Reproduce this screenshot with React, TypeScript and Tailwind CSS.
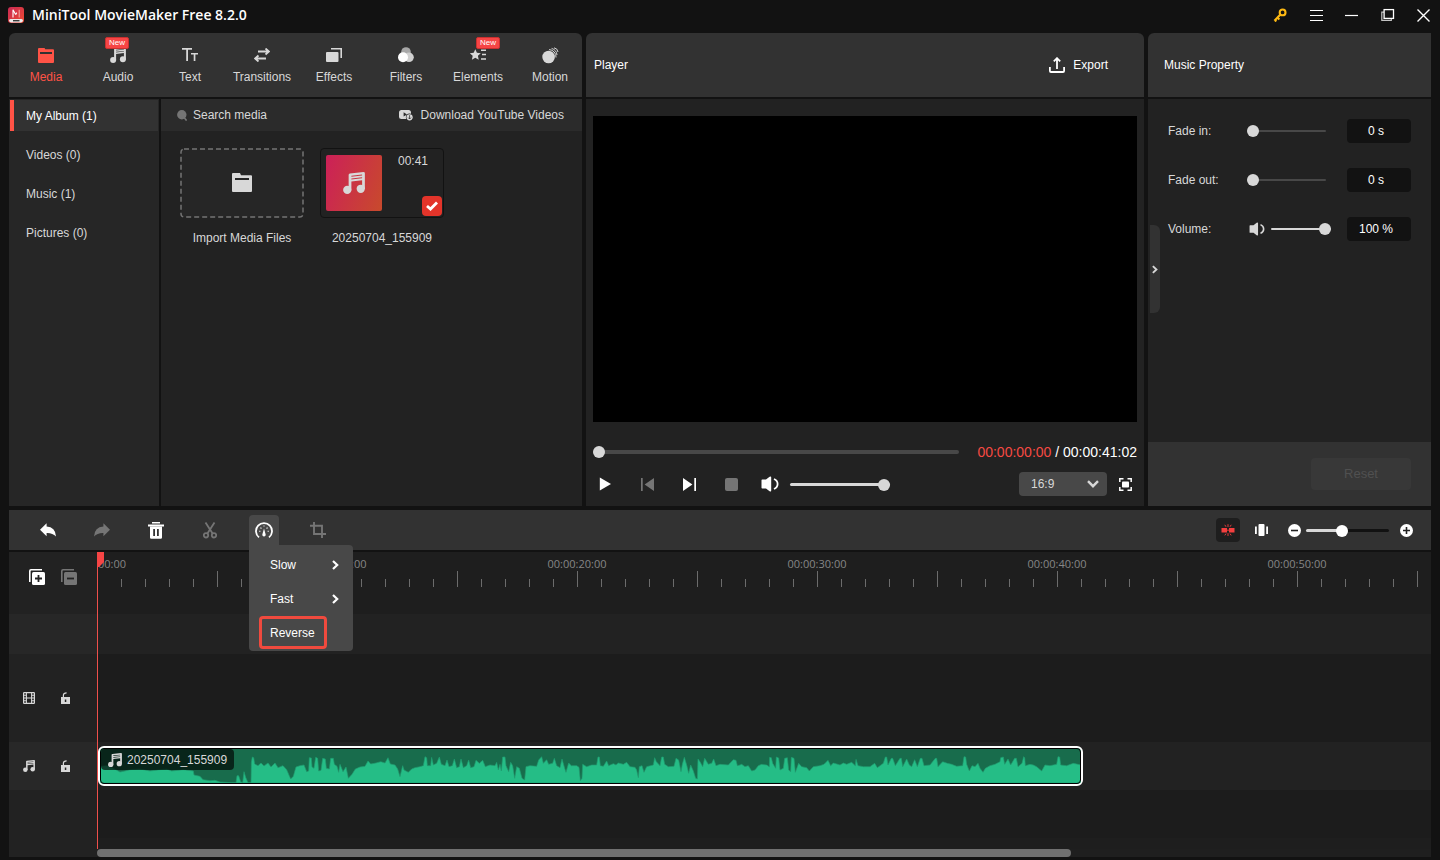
import React from "react";

type IconProps = { className?: string };

const RANGE =
  "block h-3 cursor-pointer appearance-none bg-transparent [&::-webkit-slider-runnable-track]:rounded-full [&::-webkit-slider-thumb]:size-3 [&::-webkit-slider-thumb]:appearance-none [&::-webkit-slider-thumb]:rounded-full [&::-webkit-slider-thumb]:bg-[#d8d8d8]";
const TRACK_DARK =
  "[&::-webkit-slider-runnable-track]:h-0.5 [&::-webkit-slider-runnable-track]:bg-[#484848] [&::-webkit-slider-thumb]:-mt-[5px]";
const TRACK_LIGHT =
  "[&::-webkit-slider-runnable-track]:h-0.5 [&::-webkit-slider-runnable-track]:bg-[#d8d8d8] [&::-webkit-slider-thumb]:-mt-[5px]";
const TRACK_LIGHT_THICK =
  "[&::-webkit-slider-runnable-track]:h-[3px] [&::-webkit-slider-runnable-track]:bg-[#d8d8d8] [&::-webkit-slider-thumb]:-mt-1";

/* ---------- icons ---------- */

function NoteIcon({ className = "size-4" }: IconProps) {
  return (
    <svg viewBox="0 0 16 16" className={className} fill="currentColor" aria-hidden="true">
      <path d="M4.1 2.1Q4.1 1.2 5 1L14.9 0Q15.9 0 15.9 .9V12.4H13.9V6L6.1 6.9V13.4H4.1Z M6.1 2.7V3.4L13.9 2.6V1.9Z M6.1 4.7V5.4L13.9 4.6V3.9Z" fillRule="evenodd" />
      <circle cx="3.1" cy="13" r="3" />
      <circle cx="12.9" cy="12.2" r="3" />
    </svg>
  );
}

function FolderIcon({ className = "h-[15px] w-4" }: IconProps) {
  return (
    <svg viewBox="0 0 16 15" className={className} fill="currentColor" aria-hidden="true">
      <path fillRule="evenodd" d="M1 0H6.6L7.2 1.3H15Q16 1.3 16 2.3V14Q16 15 15 15H1Q0 15 0 14V1Q0 0 1 0Z M2 4V6H14V4Z" />
    </svg>
  );
}

function TextIcon() {
  return (
    <svg viewBox="0 0 16 14" className="h-3.5 w-4" fill="currentColor" aria-hidden="true">
      <path d="M0 0H10V1.7H6V13H4.2V1.7H0Z M9 5H16V6.6H13.4V13H11.7V6.6H9Z" />
    </svg>
  );
}

function TransitionsIcon() {
  return (
    <svg viewBox="0 0 16 14" className="h-3.5 w-4" fill="none" stroke="currentColor" strokeWidth="1.8" aria-hidden="true">
      <path d="M4 3.5H15M11.5 .5L15 3.5L11.5 6.5M12 10.5H1M4.5 7.5L1 10.5L4.5 13.5" />
    </svg>
  );
}

function EffectsIcon() {
  return (
    <svg viewBox="0 0 16 14" className="h-3.5 w-4" aria-hidden="true">
      <rect x="0" y="4" width="12.5" height="10" rx="1" fill="currentColor" />
      <path d="M5 .8H15.2V10" fill="none" stroke="currentColor" strokeWidth="1.6" />
    </svg>
  );
}

function FiltersIcon() {
  return (
    <svg viewBox="0 0 16 16" className="size-4" aria-hidden="true">
      <circle cx="8" cy="5" r="4.8" fill="#a8a8a8" />
      <circle cx="11" cy="10.3" r="4.8" fill="#d0d0d0" />
      <circle cx="5" cy="10.3" r="5" fill="#ffffff" />
    </svg>
  );
}

function ElementsIcon() {
  return (
    <svg viewBox="0 0 16 12" className="h-3 w-4" fill="currentColor" aria-hidden="true">
      <path d="M5.3 .2L6.9 3.8L10.8 4.2L7.9 6.8L8.7 10.8L5.3 8.8L1.9 10.8L2.7 6.8L-.2 4.2L3.7 3.8Z" />
      <path d="M11 .5H16V2H11Z M12 4.8H16V6.3H12Z M11 9.2H16V10.7H11Z" />
    </svg>
  );
}

function MotionIcon() {
  return (
    <svg viewBox="0 0 17 17" className="size-[17px]" aria-hidden="true">
      <circle cx="6.6" cy="10" r="6.3" fill="currentColor" />
      <path d="M7 2.6A7.2 7.2 0 0 1 14 10.5M9.6 1.4Q14.6 3 15 8M12 .8Q15.6 1.4 16 5" fill="none" stroke="currentColor" strokeWidth="1" />
    </svg>
  );
}

function SpeakerIcon({ className = "h-4 w-[18px]" }: IconProps) {
  return (
    <svg viewBox="0 0 18 16" className={className} aria-hidden="true">
      <path d="M1.2 3.6H5L8.6 .8Q10.2 0 10.2 1.4V14.6Q10.2 16 8.6 15.2L5 12.4H1.2Q.5 12.4 .5 11.7V4.3Q.5 3.6 1.2 3.6Z" fill="currentColor" />
      <path d="M13 3Q16.6 4.6 16.6 8T13 13" fill="none" stroke="currentColor" strokeWidth="1.8" />
    </svg>
  );
}

function ChevronRight({ className = "h-2.5 w-[7px]" }: IconProps) {
  return (
    <svg viewBox="0 0 7 10" className={className} fill="none" stroke="currentColor" strokeWidth="2.2" aria-hidden="true">
      <path d="M1 1L5.2 5L1 9" />
    </svg>
  );
}

function LockIcon() {
  return (
    <svg viewBox="0 0 9 12" className="h-3 w-[9px]" aria-hidden="true">
      <path fillRule="evenodd" fill="currentColor" d="M0 5H9V12H0Z M3.8 7.5V10H5.3V7.5Z" />
      <path d="M2.4 5.5V3Q2.6 .8 5.6 .8" fill="none" stroke="currentColor" strokeWidth="1.2" />
    </svg>
  );
}

function FilmIcon() {
  return (
    <svg viewBox="0 0 12 12" className="size-3" fill="none" stroke="currentColor" aria-hidden="true">
      <rect x=".6" y=".6" width="10.8" height="10.8" rx=".6" strokeWidth="1.2" />
      <path d="M3.4 .5V11.5M8.6 .5V11.5M3.4 6H8.6M.5 3.2H3.4M.5 6H3.4M.5 8.8H3.4M8.6 3.2H11.5M8.6 6H11.5M8.6 8.8H11.5" strokeWidth="1.1" />
    </svg>
  );
}

function TrackStackIcon({ minus = false }: { minus?: boolean }) {
  return (
    <svg viewBox="0 0 16 16" className="size-4" aria-hidden="true">
      <path d="M.8 13V2Q.8 .8 2 .8H13" fill="none" stroke="currentColor" strokeWidth="1.6" />
      <rect x="3" y="3" width="13" height="13" rx="1.5" fill="currentColor" />
      <path d={minus ? "M6 9.5H13" : "M6 9.5H13M9.5 6V13"} stroke="#222" strokeWidth="1.8" />
    </svg>
  );
}

function ReplyIcon({ flip = false }: { flip?: boolean }) {
  return (
    <svg viewBox="0 0 16 14" className={flip ? "h-3.5 w-4 -scale-x-100" : "h-3.5 w-4"} fill="currentColor" aria-hidden="true">
      <path d="M0 6.8L6.6 .3V3.6Q15.4 4 16 13.6Q12.4 9.8 6.6 10.1V13.3Z" />
    </svg>
  );
}

function TrashIcon() {
  return (
    <svg viewBox="0 0 16 17" className="h-[17px] w-4" fill="currentColor" aria-hidden="true">
      <path d="M4 0H12V1.4H4Z M0 2.6H16V4.4H0Z" />
      <path fillRule="evenodd" d="M2 4.4H14V15.5Q14 16.8 12.7 16.8H3.3Q2 16.8 2 15.5Z M5.2 7V14H7V7Z M9 7V14H10.8V7Z" />
    </svg>
  );
}

function CutIcon() {
  return (
    <svg viewBox="0 0 14 17" className="h-[17px] w-3.5" fill="none" stroke="currentColor" strokeWidth="1.8" aria-hidden="true">
      <path d="M2.5 .5L9.6 11.4M11.5 .5L4.4 11.4" />
      <circle cx="3" cy="13.3" r="2.2" />
      <circle cx="11" cy="13.3" r="2.2" />
    </svg>
  );
}

function GaugeIcon() {
  return (
    <svg viewBox="0 0 18 17" className="h-[17px] w-[18px]" aria-hidden="true">
      <path d="M4 15.4A8 8 0 1 1 14 15.4" fill="none" stroke="currentColor" strokeWidth="1.8" />
      <path d="M9 6.5L10.6 12.2A1.7 1.7 0 1 1 7.4 12.2Z" fill="currentColor" />
      <path d="M4.2 9.2H5.4M12.6 9.2H13.8M5.5 5.7L6.4 6.5M12.5 5.7L11.6 6.5M8.5 4H9.5" stroke="currentColor" strokeWidth="1.1" />
    </svg>
  );
}

function CropIcon() {
  return (
    <svg viewBox="0 0 16 16" className="size-4" fill="none" stroke="currentColor" strokeWidth="1.9" aria-hidden="true">
      <path d="M4 0V12H16M0 3.8H12V16" />
    </svg>
  );
}

function SplitIcon() {
  return (
    <svg viewBox="0 0 14 12" className="h-3 w-3.5 text-[#f43f3f]" aria-hidden="true">
      <path d="M.5 4H6V8.6H.5Z M8 4H13.5V8.6H8Z" fill="currentColor" />
      <path d="M7 .2V3M7 9.2V12M3.8 .8L5 2.8M10.2 .8L9 2.8M3.8 11.4L5 9.6M10.2 11.4L9 9.6M6 6.2H8" stroke="currentColor" strokeWidth=".9" />
    </svg>
  );
}

function FitIcon() {
  return (
    <svg viewBox="0 0 13 12" className="h-3 w-[13px]" fill="currentColor" aria-hidden="true">
      <rect x="3.5" y="0" width="6" height="12" rx="1" />
      <rect x="0" y="2.5" width="1.8" height="7.5" />
      <rect x="11.2" y="2.5" width="1.8" height="7.5" />
    </svg>
  );
}

function ZoomDot({ plus = false }: { plus?: boolean }) {
  return (
    <svg viewBox="0 0 13 13" className="size-[13px]" aria-hidden="true">
      <circle cx="6.5" cy="6.5" r="6.5" fill="#fff" />
      <path d={plus ? "M3 6.5H10M6.5 3V10" : "M3 6.5H10"} stroke="#222" strokeWidth="1.6" />
    </svg>
  );
}

function AppLogo() {
  return (
    <svg viewBox="0 0 16 16" className="size-4" aria-hidden="true">
      <defs>
        <linearGradient id="logo" x1="0" y1="0" x2="1" y2="1">
          <stop offset="0" stopColor="#c92a55" />
          <stop offset="1" stopColor="#ef4a30" />
        </linearGradient>
      </defs>
      <rect width="16" height="16" rx="3" fill="url(#logo)" />
      <path d="M5 10.5V2.8L7.6 7.6M7.6 7.6L8.8 5.6" fill="none" stroke="#fff" strokeWidth="1.1" />
      <path d="M11.2 2.8V10.5" fill="none" stroke="#f6b7ae" strokeWidth=".9" />
      <path d="M1 13.6Q1 11.8 3 12H13Q15 11.8 15 13.6T13 15.4H3Q1 15.4 1 13.6Z" fill="#ececec" />
      <path d="M5 13.7H11.5" stroke="#3a3a3a" strokeWidth="1.4" />
    </svg>
  );
}

/* ---------- title bar ---------- */

function TitleBar() {
  return (
    <header className="flex h-[33px] shrink-0 items-center justify-between pr-[9px] pb-[3px] pl-2">
      <div className="flex items-center gap-2">
        <AppLogo />
        <h1 className="font-['Open_Sans',sans-serif] text-sm font-semibold text-white">MiniTool MovieMaker Free 8.2.0</h1>
      </div>
      <div className="flex items-center gap-[22px] text-white">
        <button aria-label="License key">
          <svg viewBox="0 0 14 14" className="size-3.5" aria-hidden="true">
            <circle cx="9.6" cy="4.4" r="2.9" fill="none" stroke="#fdb913" strokeWidth="2.1" />
            <path d="M7.4 6.6L1.4 12.8M4.6 9.8L6.4 11.6M2 12.2L3.4 13.4" fill="none" stroke="#fdb913" strokeWidth="2.1" />
          </svg>
        </button>
        <button aria-label="Menu">
          <svg viewBox="0 0 14 14" className="size-3.5" stroke="currentColor" strokeWidth="1.2" aria-hidden="true">
            <path d="M1 2.5H14M1 7.5H14M1 12.5H14" />
          </svg>
        </button>
        <button aria-label="Minimize">
          <svg viewBox="0 0 14 14" className="size-3.5" stroke="currentColor" strokeWidth="1.2" aria-hidden="true">
            <path d="M0 7.5H13" />
          </svg>
        </button>
        <button aria-label="Restore">
          <svg viewBox="0 0 14 14" className="size-3.5" fill="none" stroke="currentColor" aria-hidden="true">
            <rect x="3.1" y="1.6" width="9.4" height="8.8" strokeWidth="1.3" />
            <path d="M3 4.1H.8V12.3H10.3V10.5" strokeWidth="1.2" opacity=".75" />
          </svg>
        </button>
        <button aria-label="Close">
          <svg viewBox="0 0 14 14" className="size-3.5" stroke="currentColor" strokeWidth="1.4" aria-hidden="true">
            <path d="M.5 1.5L12.5 13.5M12.5 1.5L.5 13.5" />
          </svg>
        </button>
      </div>
    </header>
  );
}

/* ---------- media library ---------- */

const tabs: { label: string; icon: React.ReactNode; badge?: string }[] = [
  { label: "Media", icon: <FolderIcon /> },
  { label: "Audio", icon: <NoteIcon />, badge: "absolute top-1 left-[23px]" },
  { label: "Text", icon: <TextIcon /> },
  { label: "Transitions", icon: <TransitionsIcon /> },
  { label: "Effects", icon: <EffectsIcon /> },
  { label: "Filters", icon: <FiltersIcon /> },
  { label: "Elements", icon: <ElementsIcon />, badge: "absolute top-1 left-[34px]" },
  { label: "Motion", icon: <MotionIcon /> },
];

const albums = ["My Album (1)", "Videos (0)", "Music (1)", "Pictures (0)"];

function Library() {
  return (
    <section className="flex min-w-0 flex-col gap-0.5 overflow-hidden rounded-t-md">
      <nav className="flex h-16 shrink-0 overflow-hidden bg-[#323232] pl-px">
        {tabs.map((tab, i) => (
          <button
            key={tab.label}
            className={`relative flex w-[72px] shrink-0 flex-col items-center pt-3.5 ${i === 0 ? "text-[#ff5346]" : "text-[#d8d8d8]"}`}
          >
            <span className="flex h-4 items-center">{tab.icon}</span>
            <span className="mt-1.5 leading-4">{tab.label}</span>
            {tab.badge && (
              <span className={tab.badge}>
                <span className="block h-3 w-6 rounded-xs border border-[#c9302f] bg-[#f64545] text-center text-[8px] leading-[10px] text-white">New</span>
              </span>
            )}
          </button>
        ))}
      </nav>
      <div className="flex flex-1 gap-0.5">
        <ul className="flex w-[150px] shrink-0 flex-col gap-2 bg-[#262626] p-px">
          {albums.map((name, i) => (
            <li key={name}>
              <button
                className={`h-[31px] w-full border-l-4 pl-3 text-left ${
                  i === 0 ? "border-[#ff5346] bg-[#323232] text-white" : "border-transparent text-[#d8d8d8]"
                }`}
              >
                {name}
              </button>
            </li>
          ))}
        </ul>
        <div className="min-w-0 flex-1 bg-[#222222]">
          <div className="flex h-8 items-center justify-between bg-[#2b2b2b] pr-[18px] pl-4">
            <label className="flex items-center gap-1.5">
              <svg viewBox="0 0 10 11" className="h-[11px] w-2.5 text-[#757575]" aria-hidden="true">
                <circle cx="4.8" cy="4.8" r="4.7" fill="currentColor" />
                <path d="M7 7.5L9.6 10.6" stroke="currentColor" strokeWidth="1.6" />
              </svg>
              <input aria-label="Search media" placeholder="Search media" className="w-32 bg-transparent outline-none placeholder:text-[#d8d8d8]" />
            </label>
            <a href="#youtube" className="flex items-center gap-2 text-[#d8d8d8]">
              <svg viewBox="0 0 14 11" className="h-[11px] w-3.5" aria-hidden="true">
                <rect x="0" y="0" width="12" height="9" rx="2.5" fill="currentColor" />
                <path d="M4.6 2.2V6.6L8 4.4Z" fill="#2b2b2b" />
                <circle cx="10.6" cy="7.3" r="3.7" fill="#2b2b2b" />
                <circle cx="10.6" cy="7.3" r="3.1" fill="currentColor" />
                <path d="M10.6 5.2V9M9.2 7.6L10.6 9L12 7.6" stroke="#2b2b2b" strokeWidth=".8" fill="none" />
              </svg>
              Download YouTube Videos
            </a>
          </div>
          <div className="flex flex-wrap gap-4 pt-[17px] pl-[19px] text-[#d8d8d8]">
            <button className="w-[124px]">
              <svg className="block h-[70px] w-full" aria-hidden="true">
                <rect x="1" y="1" width="122" height="68" rx="3" fill="#262626" stroke="#747474" strokeWidth="1.5" strokeDasharray="5 3" />
                <path transform="translate(52 25)" fill="#d8d8d8" fillRule="evenodd" d="M1 0H8L9 2.2H19Q20 2.2 20 3.2V18Q20 19 19 19H1Q0 19 0 18V1Q0 0 1 0Z M3 5V7H17V5Z" />
              </svg>
              <span className="mt-3 block leading-4">Import Media Files</span>
            </button>
            <figure className="w-[124px]">
              <div className="flex h-[70px] gap-4 rounded-sm border border-[#121212] px-[5px] py-1.5">
                <div className="flex size-14 items-center justify-center rounded-xs bg-[linear-gradient(110deg,#cc2058,#c84a2c)]">
                  <NoteIcon className="size-[22px]" />
                </div>
                <div className="flex flex-1 flex-col">
                  <span className="leading-3">00:41</span>
                  <span className="-mr-1 mt-auto -mb-[5px] flex size-5 items-center justify-center self-end rounded-sm bg-[#e3342a]">
                    <svg viewBox="0 0 12 10" className="h-2.5 w-3" fill="none" stroke="#fff" strokeWidth="2.8" aria-hidden="true">
                      <path d="M1 5L4.5 8.1L11 1.5" />
                    </svg>
                  </span>
                </div>
              </div>
              <figcaption className="mt-3 text-center leading-4">20250704_155909</figcaption>
            </figure>
          </div>
        </div>
      </div>
    </section>
  );
}

/* ---------- player ---------- */

function Player() {
  return (
    <section className="flex min-w-0 flex-col gap-0.5 overflow-hidden rounded-t-md">
      <div className="flex h-16 shrink-0 items-center justify-between bg-[#323232] pr-9 pl-2 text-white">
        <h2>Player</h2>
        <button className="flex items-center gap-2">
          <svg viewBox="0 0 16 16" className="size-4" fill="none" stroke="currentColor" strokeWidth="1.8" aria-hidden="true">
            <path d="M.9 10V14Q.9 15 2 15H14Q15.1 15 15.1 14V10M8 12V1.5M4.8 4.4L8 1.2L11.2 4.4" />
          </svg>
          Export
        </button>
      </div>
      <div className="flex-1 bg-[#222222] px-[7px] pt-[17px] pb-2">
        <div className="aspect-video w-full bg-black" />
        <div className="mt-5 flex h-5 items-center gap-[18px]">
          <input
            type="range"
            aria-label="Position"
            defaultValue={0}
            className={`min-w-0 flex-1 ${RANGE} [&::-webkit-slider-runnable-track]:h-1 [&::-webkit-slider-runnable-track]:bg-[#484848] [&::-webkit-slider-thumb]:-mt-1`}
          />
          <p className="text-sm text-white">
            <span className="text-[#f64a42]">00:00:00:00</span> / 00:00:41:02
          </p>
        </div>
        <div className="mt-2.5 flex h-6 items-center justify-between text-white">
          <div className="flex items-center gap-[18px]">
            <button aria-label="Play" className="flex w-6 justify-center">
              <svg viewBox="0 0 12 14" className="h-3.5 w-3" fill="currentColor" aria-hidden="true"><path d="M.8 .5L12 7L.8 13.5Z" /></svg>
            </button>
            <button aria-label="Previous frame" className="flex w-6 justify-center text-[#757575]">
              <svg viewBox="0 0 13 13" className="size-[13px]" fill="currentColor" aria-hidden="true"><path d="M0 0H1.7V13H0Z M13 0V13L3.6 6.5Z" /></svg>
            </button>
            <button aria-label="Next frame" className="flex w-6 justify-center">
              <svg viewBox="0 0 13 13" className="size-[13px]" fill="currentColor" aria-hidden="true"><path d="M11.3 0H13V13H11.3Z M0 0V13L9.4 6.5Z" /></svg>
            </button>
            <button aria-label="Stop" className="flex w-6 justify-center">
              <span className="block size-[13px] rounded-xs bg-[#757575]" />
            </button>
            <div className="flex items-center gap-[11px]">
              <button aria-label="Mute"><SpeakerIcon /></button>
              <input
                type="range"
                aria-label="Player volume"
                defaultValue={100}
                className={`w-[100px] ${RANGE} ${TRACK_LIGHT_THICK}`}
              />
            </div>
          </div>
          <div className="flex items-center gap-1.5">
            <div className="relative">
              <select aria-label="Aspect ratio" className="block h-6 w-[88px] appearance-none rounded-sm bg-[#484848] pl-3 text-[#d8d8d8]">
                <option>16:9</option>
                <option>9:16</option>
                <option>4:3</option>
              </select>
              <svg viewBox="0 0 12 8" className="pointer-events-none absolute top-2 right-2 h-2 w-3" fill="none" stroke="#d8d8d8" strokeWidth="2.4" aria-hidden="true">
                <path d="M1 1.2L6 6.2L11 1.2" />
              </svg>
            </div>
            <button aria-label="Full screen" className="flex w-6 justify-center">
              <svg viewBox="0 0 13 13" className="size-[13px]" aria-hidden="true">
                <path d="M.8 4V.8H4.5M8.5 .8H12.2V4M12.2 9V12.2H8.5M4.5 12.2H.8V9" fill="none" stroke="currentColor" strokeWidth="1.5" />
                <rect x="3" y="3.5" width="7" height="6" rx=".8" fill="currentColor" />
              </svg>
            </button>
          </div>
        </div>
      </div>
    </section>
  );
}

/* ---------- properties ---------- */

function Property({ id, label, unit, children }: { id: string; label: string; unit: string; children: React.ReactNode }) {
  return (
    <div className="flex h-6 items-center">
      <label htmlFor={id} className="w-[79px] text-[#d8d8d8]">{label}</label>
      {children}
      <input aria-label={`${label} value`} defaultValue={unit} className="ml-auto h-6 w-16 rounded-sm bg-[#121212] pr-1.5 text-center text-white" />
    </div>
  );
}

function Properties() {
  return (
    <section className="relative flex min-w-0 flex-col gap-0.5">
      <h2 className="flex h-16 shrink-0 items-center rounded-tl-md bg-[#323232] pl-4 text-white">Music Property</h2>
      <div className="flex flex-1 flex-col justify-between bg-[#222222]">
        <div className="flex flex-col gap-[25px] px-5 pt-5">
          <Property id="fade-in" label="Fade in:" unit="0 s">
            <input id="fade-in" type="range" defaultValue={0} className={`w-[79px] ${RANGE} ${TRACK_DARK}`} />
          </Property>
          <Property id="fade-out" label="Fade out:" unit="0 s">
            <input id="fade-out" type="range" defaultValue={0} className={`w-[79px] ${RANGE} ${TRACK_DARK}`} />
          </Property>
          <Property id="volume" label="Volume:" unit="100 %">
            <span className="flex items-center gap-1.5 pl-0.5 text-[#d8d8d8]">
              <SpeakerIcon className="h-3.5 w-4" />
              <input id="volume" type="range" defaultValue={100} className={`w-[60px] ${RANGE} ${TRACK_LIGHT}`} />
            </span>
          </Property>
        </div>
        <div className="flex h-16 items-center justify-end bg-[#323232] pr-5">
          <button disabled className="h-8 w-[100px] rounded-sm bg-[#383838] text-[13px] text-[#505050]">Reset</button>
        </div>
      </div>
      <button aria-label="Collapse panel" className="absolute top-48 left-0.5 flex h-[88px] w-2.5 items-center justify-center rounded-r-md bg-[#323232] text-[#d8d8d8]">
        <ChevronRight className="h-[9px] w-[6px]" />
      </button>
    </section>
  );
}

/* ---------- timeline ---------- */

function SpeedMenu() {
  return (
    <div role="menu" className="absolute top-full left-0 z-20 w-[104px] rounded-b-sm rounded-tr-sm bg-[#484848] pt-[3px] pb-0.5 text-white">
      {["Slow", "Fast"].map((item) => (
        <button key={item} role="menuitem" className="flex h-[34px] w-full items-center justify-between pr-3.5 pl-[21px]">
          {item}
          <ChevronRight />
        </button>
      ))}
      <button role="menuitem" className="ml-2.5 block h-[33px] w-[68px] rounded-sm border-3 border-[#f04a3e] pl-2 text-left">
        Reverse
      </button>
    </div>
  );
}

function TimelineToolbar() {
  const tool = "flex h-[30px] w-[30px] items-center justify-center rounded-t-sm";
  return (
    <div className="flex h-10 items-center justify-between bg-[#323232] pr-[18px] pl-6">
      <div className="flex items-center gap-6 text-white">
        <button aria-label="Undo" className={tool}><ReplyIcon /></button>
        <button aria-label="Redo" className={`${tool} text-[#757575]`}><ReplyIcon flip /></button>
        <button aria-label="Delete" className={tool}><TrashIcon /></button>
        <button aria-label="Split" className={`${tool} text-[#757575]`}><CutIcon /></button>
        <div className="relative">
          <button aria-label="Speed" aria-haspopup="menu" aria-expanded="true" className={`${tool} bg-[#484848]`}><GaugeIcon /></button>
          <SpeedMenu />
        </div>
        <button aria-label="Crop" className={`${tool} text-[#757575]`}><CropIcon /></button>
      </div>
      <div className="flex items-center text-white">
        <button aria-label="Snap" className="flex size-6 items-center justify-center rounded-sm bg-[#1e1e1e]"><SplitIcon /></button>
        <button aria-label="Fit timeline" className="ml-[15px]"><FitIcon /></button>
        <button aria-label="Zoom out" className="ml-5"><ZoomDot /></button>
        <input
          type="range"
          aria-label="Timeline zoom"
          defaultValue={42}
          className={`ml-[5px] w-[83px] ${RANGE} [&::-webkit-slider-runnable-track]:h-[3px] [&::-webkit-slider-runnable-track]:bg-[linear-gradient(to_right,#d8d8d8_42%,#121212_42%)] [&::-webkit-slider-thumb]:-mt-1 [&::-webkit-slider-thumb]:bg-white`}
        />
        <button aria-label="Zoom in" className="ml-[11px]"><ZoomDot plus /></button>
      </div>
    </div>
  );
}

const marks = ["00:00", "00:00:10:00", "00:00:20:00", "00:00:30:00", "00:00:40:00", "00:00:50:00"];
const seconds = Array.from({ length: 60 }, (_, i) => i);

function Ruler() {
  return (
    <div className="h-[62px] overflow-hidden bg-[#1e1e1e]">
      <div className="-ml-[120px] flex w-max pt-1 font-['Open_Sans',sans-serif] text-[11px] leading-4 text-[#868686]">
        {marks.map((m) => (
          <span key={m} className={`w-60 text-center ${m === "00:00" ? "pl-[30px]" : ""}`}>{m}</span>
        ))}
      </div>
      <div className="-mt-px flex h-4 w-max items-end">
        {seconds.map((s) => (
          <span key={s} className={`w-6 border-l border-[#6c6c6c] ${s % 5 === 0 ? "h-4" : "h-2"}`} />
        ))}
      </div>
    </div>
  );
}

/* Outline of the audio level: x, y pairs, three units to a pixel. */
const levels: [number, number[]][] = [
  [0, [0,52, 20,50, 40,58, 60,69, 75,66, 90,62, 120,60, 150,66, 180,62, 200,60, 215,66, 250,62, 280,66, 282,78, 300,82, 309,92, 330,95, 345,94, 360,99, 395,101, 408,101, 411,80, 416,80, 422,98, 428,101, 432,68, 437,85, 444,101, 453,101, 454,40, 457,24, 461,26, 464,45, 474,50, 483,42, 492,51, 504,42, 513,54, 525,42, 534,56, 549,50, 560,62, 572,90, 580,82, 588,54, 600,50, 612,48, 620,68, 626,66, 628,26, 634,27, 636,54, 642,58, 647,25, 653,28, 656,66, 663,64, 668,28, 676,30, 679,58, 688,60, 692,28, 700,28, 703,46, 711,52, 716,70, 720,46, 729,68, 738,54, 745,88, 756,76, 766,60, 780,54, 795,52, 804,36, 812,45, 828,42, 842,38, 855,42, 864,26, 871,45, 885,48, 893,60]],
  [900, [0,83, 8,50, 12,63, 25,70, 35,60, 45,56, 60,53, 70,50, 75,23, 80,26, 82,50, 92,50, 95,25, 100,48, 110,43, 118,24, 124,46, 135,50, 141,33, 147,53, 157,50, 163,30, 170,56, 178,53, 183,30, 190,56, 200,50, 206,33, 212,56, 222,53, 228,34, 238,43, 248,34, 256,53, 270,48, 285,50, 290,40, 295,63, 300,46, 304,66, 308,24, 315,24, 318,50, 326,68, 332,40, 338,50, 344,88, 350,53, 358,58, 366,88, 374,93, 378,53, 390,50, 410,52, 416,33, 425,23, 430,43, 440,32, 446,46, 458,43, 463,28, 470,50, 480,56, 486,30, 494,58, 498,70, 506,42, 514,50, 530,50, 537,55, 541,95, 546,88, 548,46, 560,53, 575,48, 590,48, 594,24, 598,24, 601,50, 610,52, 620,36, 626,50, 640,44, 648,48, 655,42, 670,46, 680,40, 690,53, 705,55, 710,63, 715,86, 718,53, 726,50, 732,70, 740,53, 760,48, 764,26, 769,38, 780,50, 785,24, 790,24, 794,46, 805,53, 822,52, 828,28, 836,33, 843,68, 847,46, 853,25, 860,48, 866,73, 872,48, 880,66, 887,88, 892,90, 894,30, 900,38, 908,53, 914,28, 925,46, 935,43, 941,30, 948,50, 960,46, 985,48, 1000,32, 1008,34, 1012,50]],
  [1920, [0,48, 5,46, 15,53, 25,50, 35,66, 45,63, 55,50, 65,46, 80,48, 88,53, 89,25, 94,26, 98,43, 107,58, 109,24, 116,27, 120,63, 130,58, 134,28, 142,26, 146,63, 152,68, 154,25, 162,28, 166,70, 176,43, 185,53, 200,56, 208,66, 220,53, 240,50, 252,46, 264,34, 272,50, 280,42, 300,48, 310,42, 320,46, 335,40, 346,50, 348,31, 354,50, 370,53, 390,53, 404,43, 412,56, 430,43, 436,24, 440,24, 444,48, 454,28, 458,28, 466,50, 480,28, 484,28, 488,53, 500,30, 508,48, 515,53, 524,32, 532,53, 541,28, 546,28, 552,50, 570,48, 586,28, 590,28, 594,53, 608,38, 622,43, 635,46, 650,52, 668,50, 672,23, 677,24, 680,46, 688,66, 696,50, 705,53, 714,43, 720,58, 729,70, 736,58, 750,50, 765,46, 780,38, 782,26, 790,24, 794,46, 804,30, 812,48, 824,28, 829,28, 834,53, 846,43, 851,23, 854,26, 856,50, 870,46, 880,48, 890,53, 905,66, 915,48, 930,50, 950,46, 954,23, 959,24, 962,48, 980,50, 1000,43, 1023,48]],
];

function waveOutline() {
  const points: string[] = ["0,102"];
  for (const [start, pairs] of levels) {
    for (let i = 0; i < pairs.length; i += 2) points.push(`${start + pairs[i]},${pairs[i + 1]}`);
  }
  points.push("2943,102");
  return points.join(" ");
}

function Clip() {
  return (
    <div className="relative ml-px h-10 w-[985px] overflow-hidden rounded-md border-2 border-white bg-[#186c4c]">
      <svg viewBox="0 0 2943 102" preserveAspectRatio="none" className="mt-px block h-[34px] w-full" aria-hidden="true">
        <polygon points={waveOutline()} fill="#25bd86" stroke="#219b70" strokeWidth="2" />
      </svg>
      <div className="absolute top-px left-px flex h-[21px] items-center gap-[5px] rounded-sm bg-black/65 px-[7px] text-[#d8d8d8]">
        <NoteIcon className="size-3.5" />
        20250704_155909
      </div>
      <div className="pointer-events-none absolute inset-0 rounded-sm border border-black" />
    </div>
  );
}

function Timeline() {
  return (
    <section className="shrink-0">
      <TimelineToolbar />
      <div className="mt-0.5 grid grid-cols-[88px_minmax(0,1fr)]">
        <div className="bg-[#222222] text-[#d8d8d8]">
          <div className="flex h-[62px] items-start gap-4 pt-[17px] pl-5 text-white">
            <button aria-label="Add track"><TrackStackIcon /></button>
            <button aria-label="Remove track" className="text-[#757575]"><TrackStackIcon minus /></button>
          </div>
          <div className="h-10 bg-[#272727]" />
          <div className="flex h-[88px] items-center gap-[26px] pl-3.5">
            <FilmIcon />
            <button aria-label="Lock video track"><LockIcon /></button>
          </div>
          <div className="flex h-12 items-center gap-[26px] bg-[#282828] pl-3.5">
            <NoteIcon className="size-3" />
            <button aria-label="Lock audio track"><LockIcon /></button>
          </div>
        </div>
        <div className="relative bg-[#1c1c1c]">
          <Ruler />
          <div className="h-10 bg-[#222222]" />
          <div className="h-[88px]" />
          <div className="flex h-12 items-center bg-[#222222]"><Clip /></div>
          <div className="h-12" />
          <div className="h-[11px] bg-[#1e1e1e]" />
          <div className="h-2 bg-[#1f1f1f]">
            <div className="h-2 w-[73%] rounded-full bg-[#707070]" />
          </div>
          <div className="absolute top-0 bottom-2 left-0 w-px bg-[#ee4f4b]">
            <svg viewBox="0 0 7 15" className="h-[15px] w-[7px] max-w-none" aria-hidden="true">
              <path d="M0 0H7V10L2 15H0Z" fill="#f64545" />
            </svg>
          </div>
        </div>
      </div>
    </section>
  );
}

export default function App() {
  return (
    <div className="flex min-h-screen flex-col bg-[#121212] pb-[3px] font-['Liberation_Sans',Arial,sans-serif] text-xs">
      <TitleBar />
      <main className="flex flex-1 flex-col gap-1 px-[9px]">
        <div className="grid flex-1 grid-cols-[573fr_558fr_283fr] gap-1">
          <Library />
          <Player />
          <Properties />
        </div>
        <Timeline />
      </main>
    </div>
  );
}
